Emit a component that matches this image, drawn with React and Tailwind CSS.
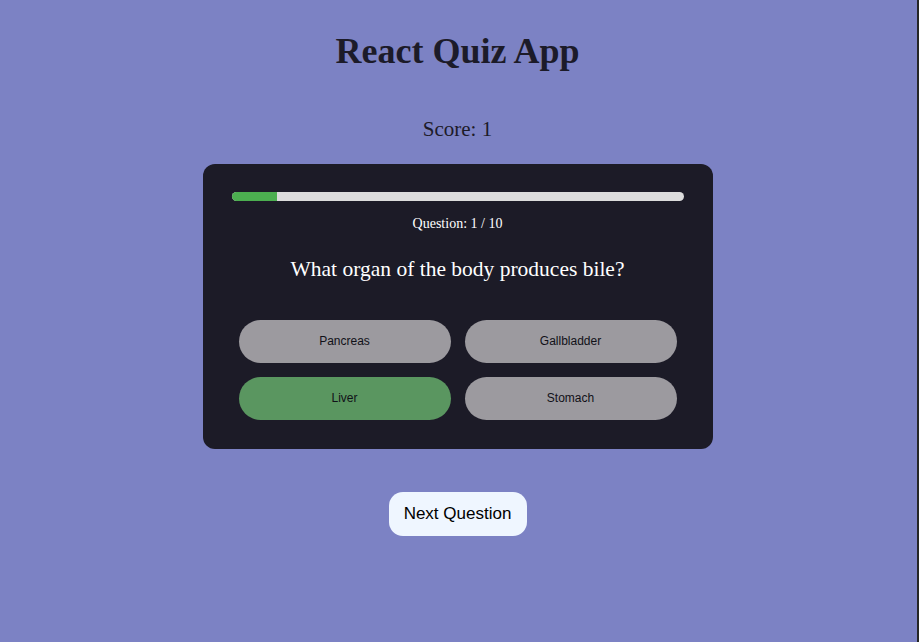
export default function App() {
  const answers = [
    { t: "Pancreas", ok: false },
    { t: "Gallbladder", ok: false },
    { t: "Liver", ok: true },
    { t: "Stomach", ok: false },
  ];
  return (
    <div className="flex min-h-[642px] w-full bg-[#7c82c4]">
      <div className="flex flex-1 flex-col items-center pr-[2px]">
        <h1
          className="mt-[33px] text-[36px] font-bold leading-none text-[#1c1b29]"
          style={{ fontFamily: '"Liberation Serif", "Times New Roman", serif' }}
        >
          React Quiz App
        </h1>
        <p
          className="mt-[50px] text-[21px] leading-none text-[#1c1b29]"
          style={{ fontFamily: '"Liberation Serif", "Times New Roman", serif' }}
        >
          Score: 1
        </p>
        <div className="mt-[24px] flex w-[510px] flex-col items-center rounded-[12px] bg-[#1c1b27] px-[29px] pt-[28px] pb-[29px]">
          <div className="h-[9px] w-full overflow-hidden rounded-full bg-[#dcdcdc]">
            <div className="h-full w-[10%] bg-[#4caf50]" />
          </div>
          <p
            className="mt-[16px] text-[14px] leading-none text-white"
            style={{ fontFamily: '"Liberation Serif", "Times New Roman", serif' }}
          >
            Question: 1 / 10
          </p>
          <p
            className="mt-[28px] text-[21.5px] leading-none text-white"
            style={{ fontFamily: '"Liberation Serif", "Times New Roman", serif' }}
          >
            What organ of the body produces bile?
          </p>
          <div className="mt-[39px] grid grid-cols-[212px_212px] gap-x-[14px] gap-y-[14px]">
            {answers.map((a) => (
              <button
                key={a.t}
                className={`h-[43px] rounded-full text-[12px] text-[#111118] ${
                  a.ok ? "bg-[#5a9660]" : "bg-[#9c9a9f]"
                }`}
                style={{ fontFamily: '"Liberation Sans", Arial, sans-serif' }}
              >
                {a.t}
              </button>
            ))}
          </div>
        </div>
        <button
          className="mt-[43px] h-[44px] w-[138px] rounded-[14px] bg-[#eff6ff] text-[17px] text-black"
          style={{ fontFamily: '"Liberation Sans", Arial, sans-serif' }}
        >
          Next Question
        </button>
      </div>
      <div className="w-[2px] bg-[#262626]" />
    </div>
  );
}
